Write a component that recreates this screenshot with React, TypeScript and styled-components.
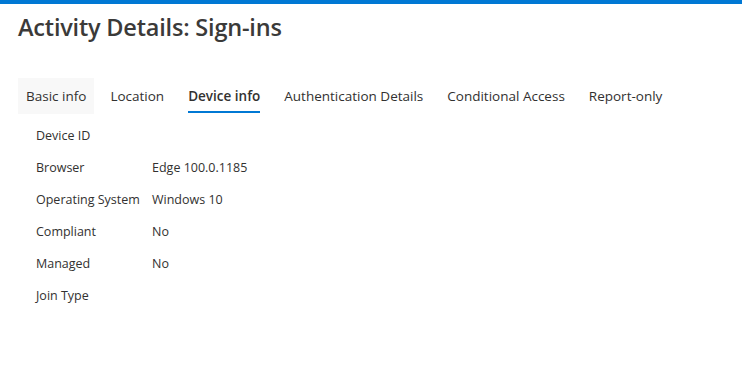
import styled, { createGlobalStyle } from "styled-components";

const GlobalStyle = createGlobalStyle`
  html, body {
    margin: 0;
    padding: 0;
    background: #ffffff;
    font-family: "Open Sans", "Noto Sans", sans-serif;
    color: #323130;
  }
`;

const tabs = [
  "Basic info",
  "Location",
  "Device info",
  "Authentication Details",
  "Conditional Access",
  "Report-only",
];

const rows: [string, string][] = [
  ["Device ID", ""],
  ["Browser", "Edge 100.0.1185"],
  ["Operating System", "Windows 10"],
  ["Compliant", "No"],
  ["Managed", "No"],
  ["Join Type", ""],
];

export default function App() {
  return (
    <>
      <GlobalStyle />
      <Page>
        <TopBar />
        <Content>
          <Title>Activity Details: Sign-ins</Title>
          <TabList>
            {tabs.map((t) => (
              <Tab key={t} $active={t === "Device info"} $hovered={t === "Basic info"}>
                <TabLabel $active={t === "Device info"}>{t}</TabLabel>
              </Tab>
            ))}
          </TabList>
          <Details>
            {rows.map(([label, value]) => (
              <Row key={label}>
                <Label>{label}</Label>
                <Value>{value}</Value>
              </Row>
            ))}
          </Details>
        </Content>
      </Page>
    </>
  );
}

const Page = styled.div`
  width: 742px;
  height: 385px;
  background: #fff;
`;

const TopBar = styled.div`
  height: 4px;
  background: #0078d4;
`;

const Content = styled.div`
  padding: 0 18px;
`;

const Title = styled.h1`
  margin: 0;
  padding-top: 8px;
  font-size: 23.5px;
  line-height: 30px;
  font-weight: 600;
  color: #3b3a39;
  letter-spacing: -0.2px;
`;

const TabList = styled.div`
  display: flex;
  gap: 8px;
  margin-top: 36px;
`;

const Tab = styled.div<{ $active?: boolean; $hovered?: boolean }>`
  height: 36px;
  padding: 0 8px;
  display: flex;
  align-items: center;
  background: ${(p) => (p.$hovered ? "#f8f8f8" : "transparent")};
  position: relative;
  font-size: 13.5px;
  color: #323130;
  &::after {
    content: "";
    display: ${(p) => (p.$active ? "block" : "none")};
    position: absolute;
    left: 8px;
    right: 8px;
    bottom: 1px;
    height: 2px;
    background: #0078d4;
  }
`;

const TabLabel = styled.span<{ $active?: boolean }>`
  font-weight: ${(p) => (p.$active ? 600 : 400)};
`;

const Details = styled.div`
  margin-top: 5px;
  padding-left: 18px;
`;

const Row = styled.div`
  display: flex;
  height: 32px;
  align-items: center;
  font-size: 12.5px;
`;

const Label = styled.div`
  width: 116px;
  flex-shrink: 0;
`;

const Value = styled.div``;
